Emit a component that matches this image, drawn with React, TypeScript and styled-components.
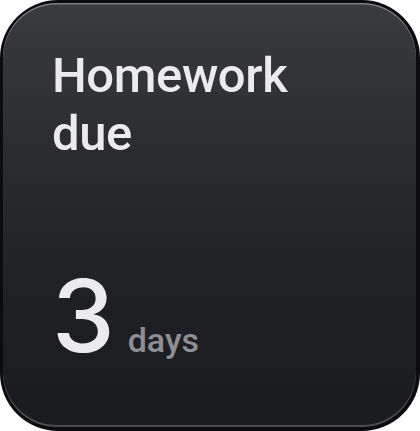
import styled, { createGlobalStyle } from 'styled-components';

const GlobalStyle = createGlobalStyle`
  html, body {
    margin: 0;
    padding: 0;
    background: #ffffff;
  }
`;

const Bezel = styled.div`
  width: 420px;
  height: 431px;
  box-sizing: border-box;
  padding: 3px 4px 4px 3px;
  border-radius: 58px;
  background: #0c0c0e;
`;

const Card = styled.div`
  height: 100%;
  box-sizing: border-box;
  border-radius: 54px;
  padding: 44px 0 61px 49px;
  display: flex;
  flex-direction: column;
  justify-content: space-between;
  background: linear-gradient(180deg, #3a3b3f 0%, #2b2c30 35%, #1f2024 70%, #1a1b1f 100%);
  box-shadow:
    inset 0 1.5px 0 rgba(255, 255, 255, 0.35),
    inset 0 -2px 0 rgba(255, 255, 255, 0.22);
`;

const Title = styled.h1`
  margin: 0;
  font-family: Roboto, 'Liberation Sans', sans-serif;
  font-weight: 500;
  font-size: 49px;
  line-height: 58px;
  color: #ebebef;
  letter-spacing: -0.4px;
`;

const Count = styled.div`
  display: flex;
  align-items: baseline;
  gap: 13px;
`;

const Number = styled.span`
  font-family: Inter, Roboto, sans-serif;
  font-weight: 500;
  font-size: 100px;
  line-height: 1;
  color: #ebebef;
`;

const Unit = styled.span`
  font-family: Roboto, 'Liberation Sans', sans-serif;
  font-weight: 500;
  font-size: 34px;
  color: #8e8e95;
`;

export default function App() {
  return (
    <>
      <GlobalStyle />
      <Bezel>
        <Card>
          <Title>
            Homework
            <br />
            due
          </Title>
          <Count>
            <Number>3</Number>
            <Unit>days</Unit>
          </Count>
        </Card>
      </Bezel>
    </>
  );
}
